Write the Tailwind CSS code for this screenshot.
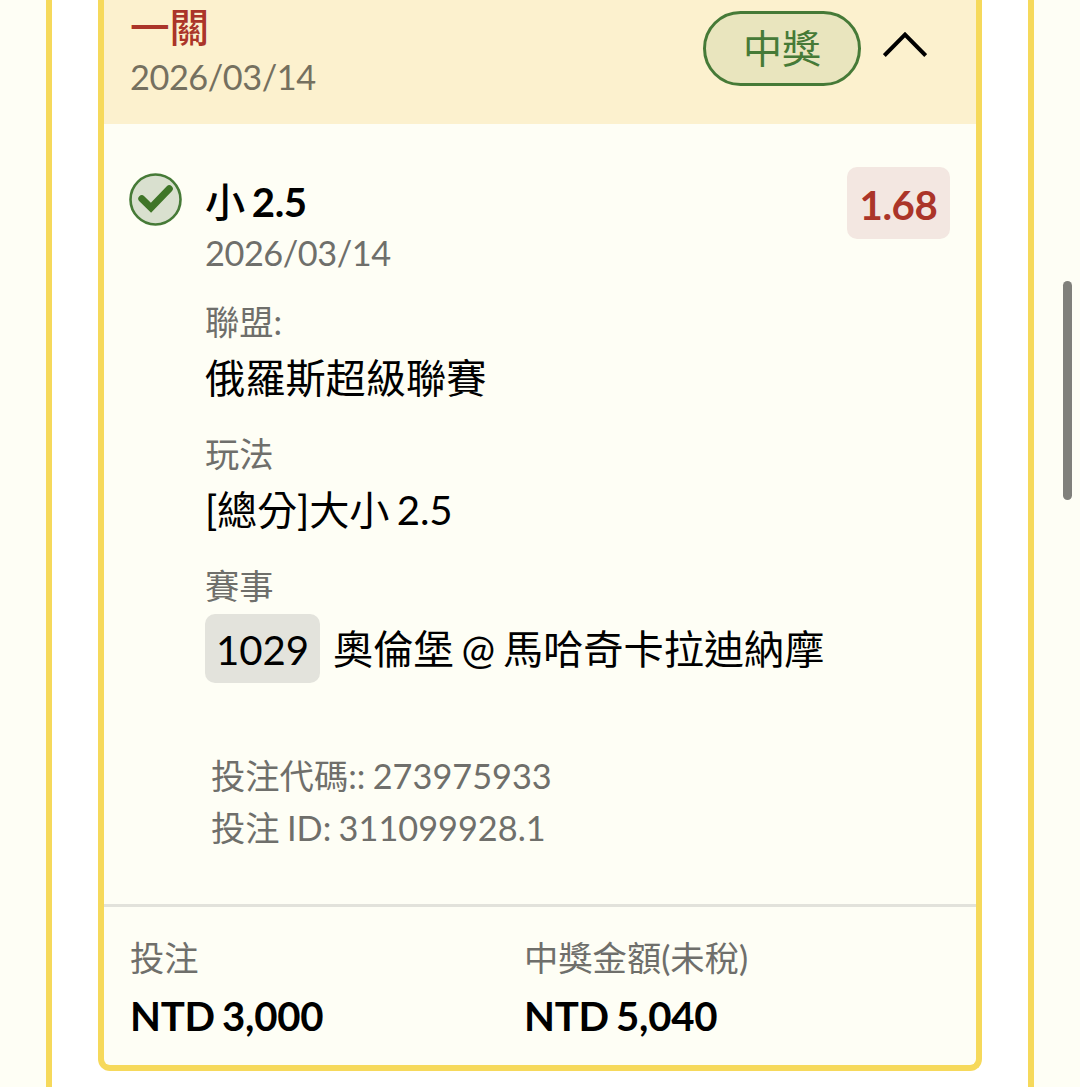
<!DOCTYPE html>
<html lang="zh-Hant">
  <head>
    <meta charset="UTF-8" />
    <meta name="viewport" content="width=device-width, initial-scale=1.0" />
    <title>投注紀錄</title>
    <script src="https://cdn.jsdelivr.net/npm/@tailwindcss/browser@4"></script>
  </head>
  <body
    class="relative h-[1087px] overflow-hidden bg-[#fefef5] px-[46px] font-[Lato,'Noto_Sans_CJK_TC',sans-serif] text-[40.2px] text-black [word-spacing:-2.4px]"
  >
    <!-- Outer panel -->
    <div class="h-full border-x-6 border-[#f6d95b] bg-white px-[46px]">
      <!-- Bet card -->
      <div
        class="flex h-[1071px] flex-col overflow-hidden rounded-b-xl border-6 border-t-0 border-[#f6d95b] bg-[#fefef5]"
      >
        <!-- Header -->
        <div class="flex h-[124px] shrink-0 justify-between bg-[#fcf1ce] pt-[2px] pr-[49px] pl-[26px]">
          <div class="whitespace-nowrap">
            <p class="text-[39.6px] leading-[50px] font-medium text-[#ab3529]">一關</p>
            <p class="text-[34.3px] leading-[50px] tracking-[-0.45px] text-[#75705f]">2026/03/14</p>
          </div>
          <div class="flex h-[75px] items-center gap-[22px] pt-[18px]">
            <span
              class="flex h-[75px] w-[158px] shrink-0 items-center justify-center rounded-full border-[3px] border-[#467a37] bg-[#e9e5be] text-[39px] leading-none text-[#467a37]"
              >中獎</span
            >
            <svg class="mb-[10px] h-[26px] w-[44px]" viewBox="0 0 44 26" fill="none" stroke="#000" stroke-width="4">
              <path d="M1.3 24.5 22 3.6l20.7 20.9" />
            </svg>
          </div>
        </div>

        <!-- Selection -->
        <div class="flex h-[780px] shrink-0 items-start pt-[43px] pr-[26px] pl-[25px]">
          <svg class="mt-[6px] h-[53px] w-[53px] shrink-0" viewBox="0 0 53 53" fill="none">
            <circle cx="26.5" cy="26.5" r="25" fill="#d9e0cf" stroke="#467a37" stroke-width="2.6" />
            <path
              d="M12.8 25.8 22 34.8 40.3 15.8"
              stroke="#3f7528"
              stroke-width="7"
              stroke-linecap="round"
            />
          </svg>
          <div class="ml-[23px] flex-1 pt-[9px] whitespace-nowrap">
            <p class="leading-[51px] font-bold tracking-[-0.4px]"><span class="font-medium">小</span> 2.5</p>
            <p class="text-[34.3px] leading-[51px] tracking-[-0.45px] text-[#6f6f6b]">2026/03/14</p>
            <dl class="pt-[18px]">
              <dt class="text-[34.3px] leading-[52px] text-[#6f6f6b]">聯盟:</dt>
              <dd class="leading-[60px]">俄羅斯超級聯賽</dd>
              <dt class="mt-[20px] text-[34.3px] leading-[52px] text-[#6f6f6b]">玩法</dt>
              <dd class="leading-[60px] tracking-[-0.2px]">[總分]大小 2.5</dd>
              <dt class="mt-[20px] text-[34.3px] leading-[52px] text-[#6f6f6b]">賽事</dt>
              <dd class="mt-[2px] flex items-center leading-[69px]">
                <span class="mr-[13px] h-[69px] w-[115px] rounded-[10px] bg-[#e3e3dc] text-center leading-[71px]">1029</span>
                奧倫堡 @ 馬哈奇卡拉迪納摩
              </dd>
            </dl>
            <div class="mt-[67px] ml-[6px] text-[34.3px] leading-[52px] text-[#6f6f6b] [word-spacing:-1.4px]">
              <p>投注代碼:: 273975933</p>
              <p>投注 ID: 311099928.1</p>
            </div>
          </div>
          <span
            class="-ml-[103px] h-[72px] w-[103px] rounded-[10px] bg-[#f3e7e1] text-center leading-[75px] font-bold tracking-[-0.4px] text-[#ab3529]"
            >1.68</span
          >
        </div>

        <!-- Totals -->
        <div class="flex flex-1 border-t-3 border-[#e2e2db] pt-[25px] pl-[26px]">
          <div class="w-[394px]">
            <p class="text-[34.3px] leading-[52px] text-[#6f6f6b]">投注</p>
            <p class="leading-[64px] font-bold tracking-[-0.25px]">NTD 3,000</p>
          </div>
          <div>
            <p class="text-[34.3px] leading-[52px] text-[#6f6f6b]">中獎金額(未稅)</p>
            <p class="leading-[64px] font-bold tracking-[-0.25px]">NTD 5,040</p>
          </div>
        </div>
      </div>
    </div>

    <!-- Scrollbar -->
    <div class="absolute top-[281px] right-[8px] h-[219px] w-[9px] rounded-full bg-[#80807b]"></div>
  </body>
</html>
